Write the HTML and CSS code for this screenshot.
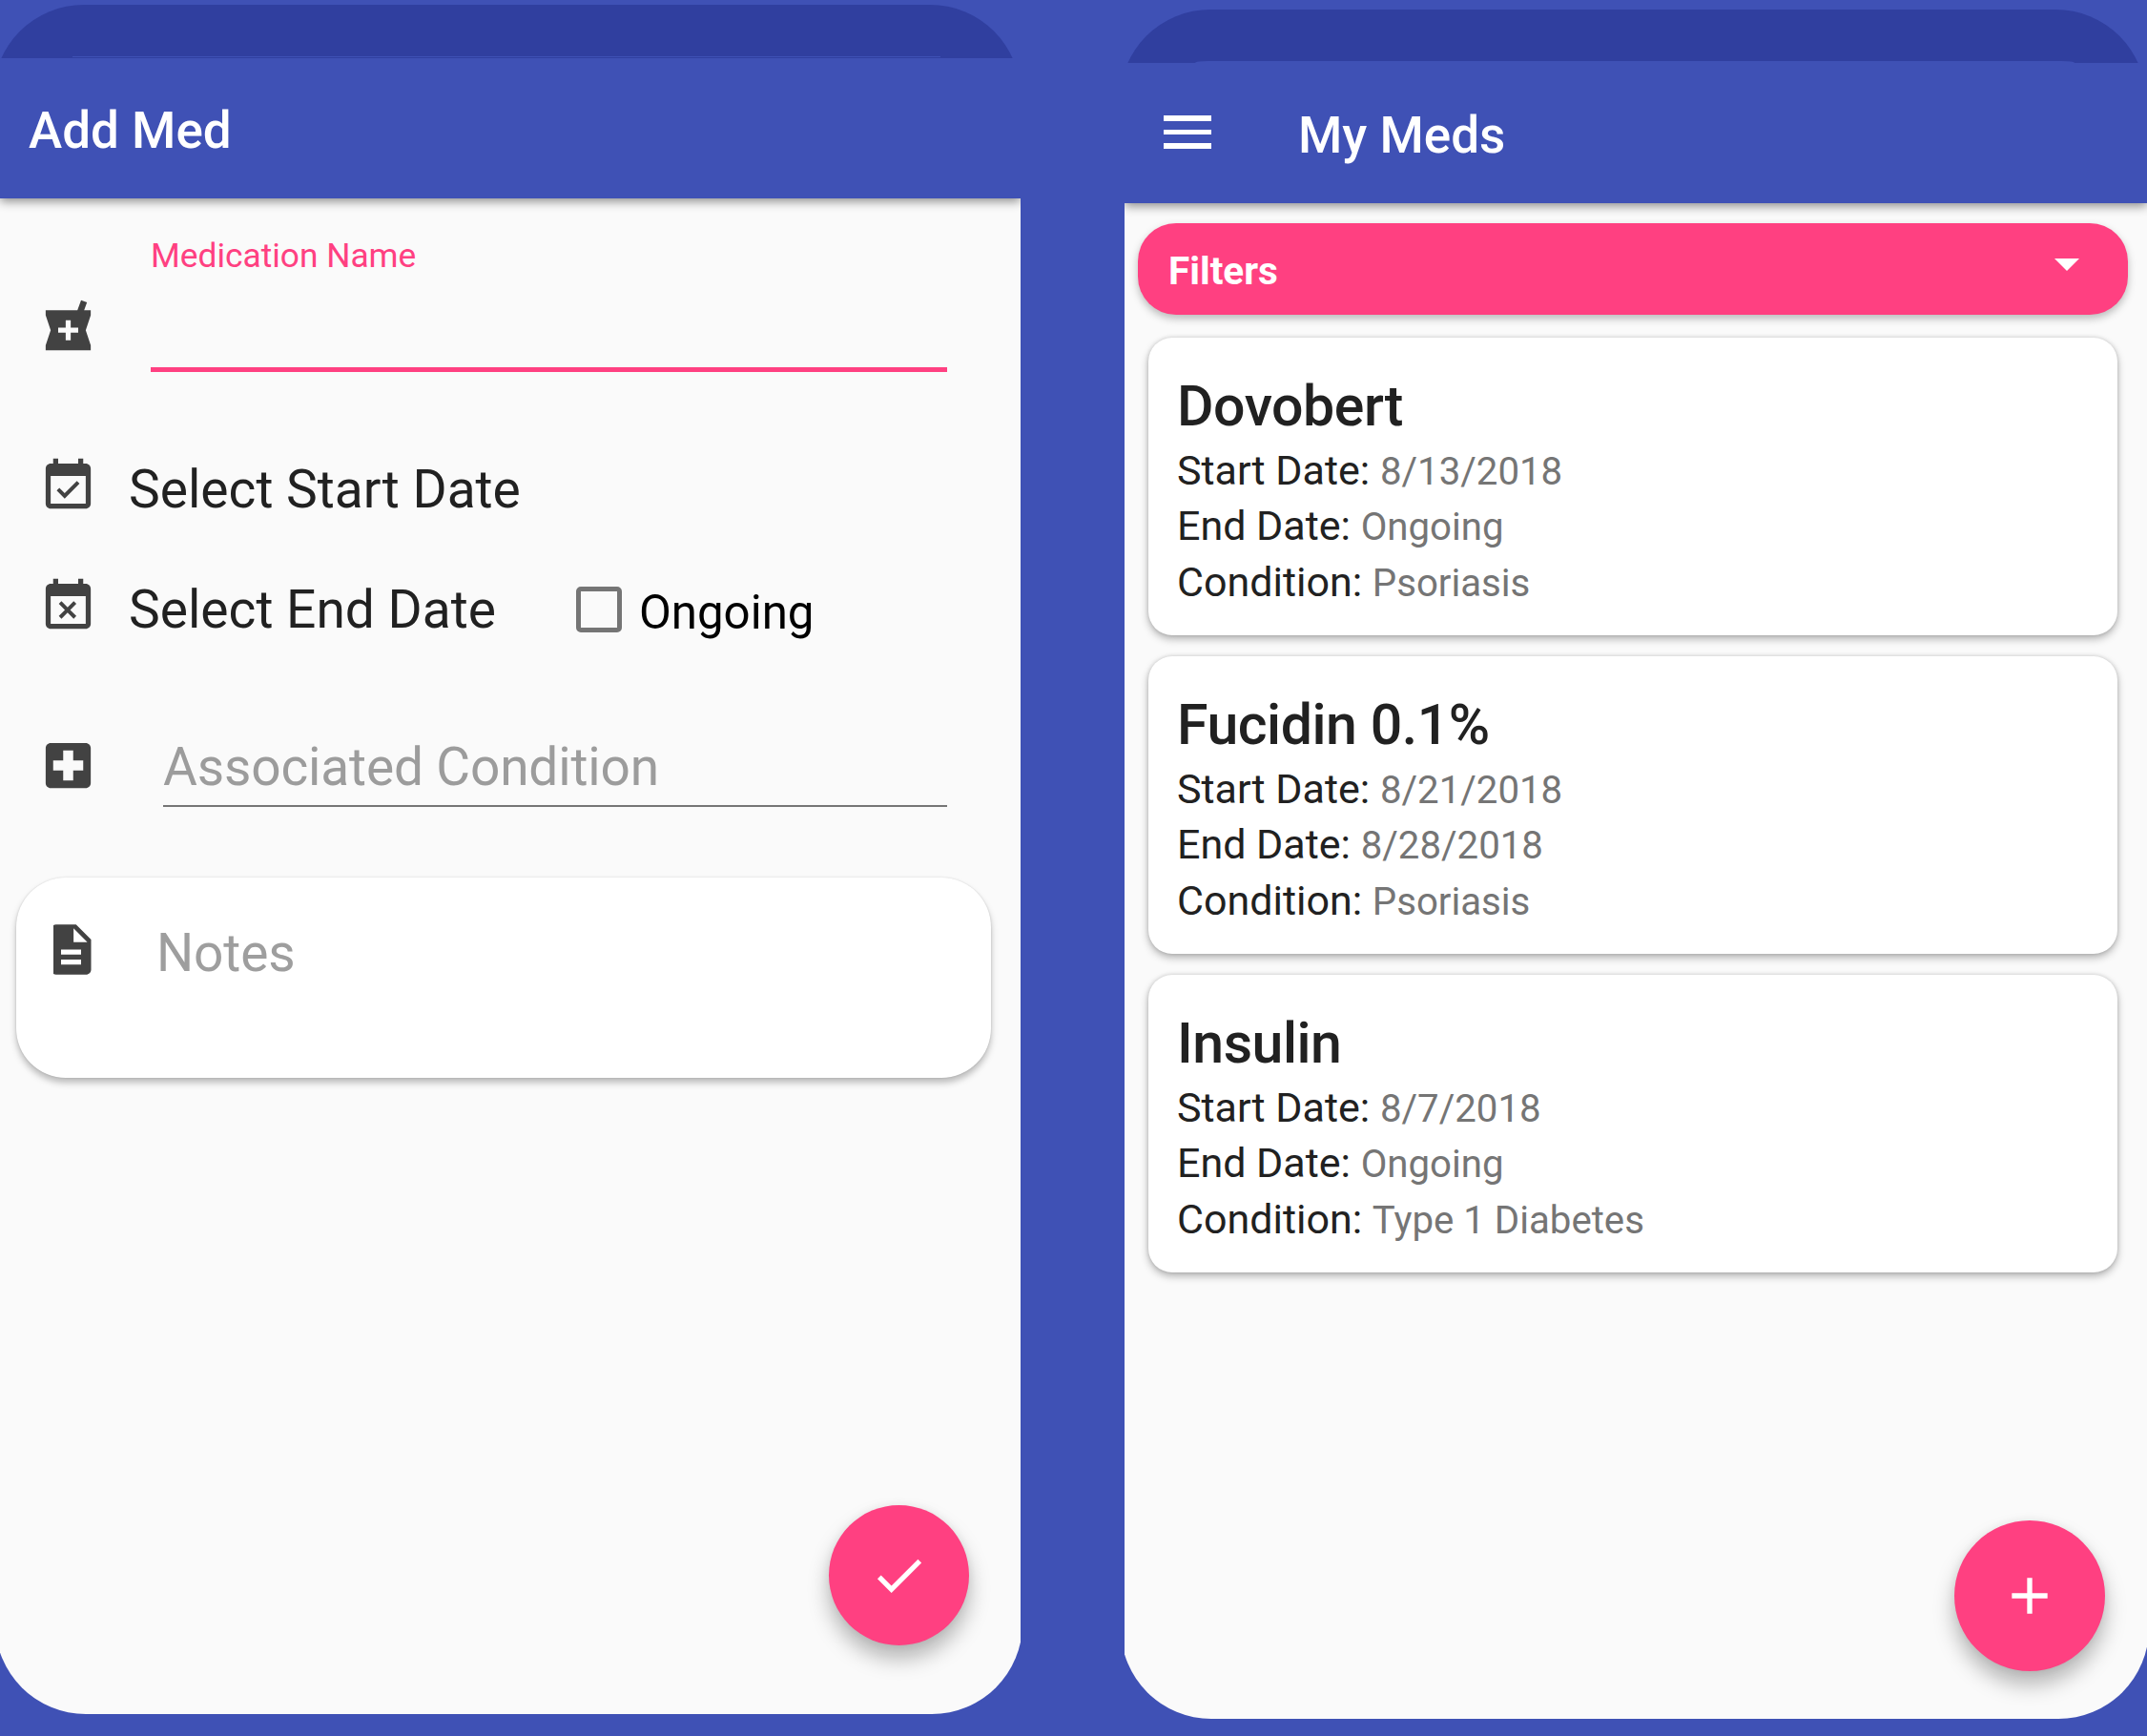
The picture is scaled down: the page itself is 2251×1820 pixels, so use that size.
FILE: index.html
```html
<!DOCTYPE html>
<html lang="en">
<head>
<meta charset="utf-8">
<title>Meds</title>
<link rel="stylesheet" href="styles.css">
</head>
<body>
<main class="stage">
  <section class="phone phone-add">
    <div class="status"><div class="status-fill"></div></div>
    <div class="screen">
      <header class="appbar"><h1 class="title">Add Med</h1></header>
      <form class="form">
        <div class="row row-name">
          <svg class="icon" viewBox="0 0 24 24"><path fill="currentColor" d="M21 5h-2.640l1.140-3.140L17.150 1l-1.460 4H3v2l2 6-2 6v2h18v-2l-2-6 2-6V5zm-5 9h-3v3h-2v-3H8v-2h3V9h2v3h3v2z"/></svg>
          <div class="name-field"><label class="float-label">Medication Name</label></div>
        </div>
        <div class="row row-start">
          <svg class="icon" viewBox="0 0 24 24"><path fill="currentColor" d="M16.530 11.060L15.470 10l-4.880 4.880-2.120-2.120-1.060 1.060L10.590 17l5.940-5.940zM19 3h-1V1h-2v2H8V1H6v2H5c-1.110 0-1.990.9-1.990 2L3 19c0 1.100.890 2 2 2h14c1.100 0 2-.9 2-2V5c0-1.100-.9-2-2-2zm0 16H5V8h14v11z"/></svg>
          <span class="pick">Select Start Date</span>
        </div>
        <div class="row row-end">
          <svg class="icon" viewBox="0 0 24 24"><path fill="currentColor" d="M9.310 17l2.440-2.440L14.190 17l1.060-1.060-2.440-2.440 2.440-2.440L14.190 10l-2.440 2.440L9.310 10l-1.060 1.060 2.440 2.440-2.440 2.440L9.310 17zM19 3h-1V1h-2v2H8V1H6v2H5c-1.110 0-1.990.9-1.990 2L3 19c0 1.100.890 2 2 2h14c1.100 0 2-.9 2-2V5c0-1.100-.9-2-2-2zm0 16H5V8h14v11z"/></svg>
          <span class="pick pick-end">Select End Date</span>
          <span class="checkbox"></span>
          <span class="check-label">Ongoing</span>
        </div>
        <div class="row row-cond">
          <svg class="icon" viewBox="0 0 24 24"><path fill="currentColor" d="M19 3H5c-1.100 0-1.990.9-1.990 2L3 19c0 1.100.9 2 2 2h14c1.100 0 2-.9 2-2V5c0-1.100-.9-2-2-2zm-1 11h-4v4h-4v-4H6v-4h4V6h4v4h4v4z"/></svg>
          <div class="cond-field">Associated Condition</div>
        </div>
        <div class="notes">
          <svg class="icon" viewBox="0 0 24 24"><path fill="currentColor" d="M14 2H6c-1.100 0-1.990.9-1.990 2L4 20c0 1.100.890 2 1.990 2H18c1.100 0 2-.9 2-2V8l-6-6zm2 16H8v-2h8v2zm0-4H8v-2h8v2zm-3-5V3.500L18.500 9H13z"/></svg>
          <span class="notes-text">Notes</span>
        </div>
      </form>
    </div>
    <div class="fab fab-check"><svg viewBox="0 0 24 24"><path fill="currentColor" d="M9 16.170L4.830 12l-1.420 1.410L9 19 21 7l-1.410-1.410z"/></svg></div>
  </section>

  <section class="phone phone-list">
    <div class="status"><div class="status-fill"></div></div>
    <div class="screen">
      <header class="appbar">
        <div class="burger"><i></i><i></i><i></i></div>
        <h1 class="title">My Meds</h1>
      </header>
      <div class="list">
        <div class="filters"><span>Filters</span><i class="caret"></i></div>
        <article class="card">
          <h2>Dovobert</h2>
          <p>Start Date: <span>8/13/2018</span></p>
          <p>End Date: <span>Ongoing</span></p>
          <p>Condition: <span>Psoriasis</span></p>
        </article>
        <article class="card">
          <h2>Fucidin 0.1%</h2>
          <p>Start Date: <span>8/21/2018</span></p>
          <p>End Date: <span>8/28/2018</span></p>
          <p>Condition: <span>Psoriasis</span></p>
        </article>
        <article class="card">
          <h2>Insulin</h2>
          <p>Start Date: <span>8/7/2018</span></p>
          <p>End Date: <span>Ongoing</span></p>
          <p>Condition: <span>Type 1 Diabetes</span></p>
        </article>
      </div>
    </div>
    <div class="fab fab-add"><svg viewBox="0 0 24 24"><path fill="currentColor" d="M19 13h-6v6h-2v-6H5v-2h6V5h2v6h6v2z"/></svg></div>
  </section>
</main>
</body>
</html>
```
FILE: styles.css
```css
* { box-sizing: border-box; }
body {
  margin: 0;
  background: #3f51b5;
  font-family: Roboto, sans-serif;
  color: #212121;
}
.stage {
  display: flex;
  justify-content: space-between;
  width: 2251px;
  height: 1820px;
  overflow: hidden;
}
h1, h2, p { margin: 0; }

.phone {
  position: relative;
  display: flex;
  flex-direction: column;
}
.phone-add { width: 1070px; height: 1797px; padding-top: 5px; }
.phone-list { width: 1072px; height: 1802px; padding-top: 10px; }

.status { position: relative; height: 56px; overflow: hidden; flex: none; }
.status-fill {
  height: 190px;
  border-radius: 95px;
  background: #303f9f;
}
.phone-add .status-fill { margin: 0 0 0 -7px; }
.phone-list .status-fill { margin: 0 1px 0 -5px; }

/* thin lip of the app bar over the status bar */
.status::after {
  content: "";
  position: absolute;
  background: #3f51b5;
}
.phone-add .status::after { left: 76px; right: 84px; bottom: 1px; height: 1px; }
.phone-list .status::after {
  left: 74px;
  right: 76px;
  bottom: 0;
  height: 2px;
  border-radius: 14px 14px 0 0 / 2px 2px 0 0;
}

.screen {
  flex: 1;
  background: #fafafa;
  border-radius: 0 0 95px 95px;
}
.phone-add .screen { margin: 0 -2px 0 -5px; padding: 0 2px 0 5px; clip-path: inset(0 2px 0 5px); }
.phone-list .screen { margin: 0 -2px 0 -4px; padding: 0 2px 0 4px; clip-path: inset(0 2px 0 4px); }

.appbar {
  display: flex;
  align-items: center;
  height: 147px;
  background: #3f51b5;
  box-shadow: 0 3px 10px rgba(0, 0, 0, .45);
}
.title {
  font-size: 53px;
  line-height: 62px;
  font-weight: 500;
  color: #fff;
}
.phone-add .title { padding: 5px 0 0 30px; }
.phone-list .title { padding: 5px 0 0 91px; }
.burger {
  display: flex;
  flex-direction: column;
  gap: 8.5px;
  width: 50px;
  margin: -2px 0 0 41px;
}
.burger i { height: 5.700px; background: #fff; }

.icon { flex: none; width: 63px; height: 63px; color: #424242; }
.row { display: flex; align-items: flex-start; padding-left: 40px; }
.row-name { height: 255px; padding-top: 104px; }
.name-field {
  width: 835px;
  height: 143px;
  margin: -65px 0 0 55px;
  border-bottom: 5px solid #ff4081;
}
.float-label { font-size: 35.300px; line-height: 42px; color: #ff4081; display: block; }
.row-start { height: 126px; padding-top: 15px; }
.row-end { height: 168px; padding-top: 15px; }
.pick { font-size: 55.100px; line-height: 66px; margin: 2px 0 0 32px; }
.pick-end { width: 469px; }
.checkbox {
  width: 48px;
  height: 48px;
  margin-top: 11px;
  border: 5px solid #757575;
  border-radius: 5px;
}
.check-label { font-size: 49.200px; line-height: 58px; margin: 9px 0 0 18px; color: #000; }
.row-cond { height: 163px; padding-top: 14px; }
.cond-field {
  width: 822px;
  height: 79px;
  margin: -4px 0 0 68px;
  font-size: 55px;
  letter-spacing: -.150px;
  line-height: 74px;
  color: #9c9c9c;
  border-bottom: 2px solid #757575;
}
.notes {
  display: flex;
  width: 1022px;
  height: 210px;
  margin-left: 17px;
  padding: 44px 0 0 26px;
  background: #fff;
  border-radius: 52px;
  box-shadow: 0 5px 7px rgba(0, 0, 0, .26), 0 0 2px rgba(0, 0, 0, .15);
}
.notes .icon { clip-path: inset(0 0 0 13px); }
.notes-text { font-size: 55px; letter-spacing: -.150px; line-height: 70px; margin-left: 58px; color: #9e9e9e; }

.fab {
  position: absolute;
  display: flex;
  align-items: center;
  justify-content: center;
  border-radius: 50%;
  background: #ff4081;
  color: #fff;
  box-shadow: 0 14px 22px rgba(0, 0, 0, .28), 0 0 10px rgba(0, 0, 0, .06);
}
.fab-check { width: 147px; height: 147px; left: 869px; top: 1578px; }
.fab-check svg { width: 63px; height: 63px; }
.fab-add { width: 158px; height: 158px; left: 870px; top: 1594px; }
.fab-add svg { width: 64px; height: 64px; }

.list { padding-top: 21px; }
.filters {
  display: flex;
  align-items: flex-start;
  justify-content: space-between;
  width: 1038px;
  height: 96px;
  margin: 0 0 24px 14px;
  padding: 27px 51px 0 32px;
  background: #ff4081;
  border-radius: 40px;
  box-shadow: 0 4px 8px rgba(0, 0, 0, .26);
  font-size: 40.500px;
  line-height: 47px;
  font-weight: 700;
  color: #fff;
}
.caret {
  margin-top: 10px;
  border: solid transparent;
  border-width: 13px 13px 0;
  border-top-color: #fff;
}
.card {
  width: 1016px;
  height: 312px;
  margin: 0 0 22px 25px;
  padding: 37px 30px 0;
  background: #fff;
  border-radius: 25px;
  box-shadow: 0 4px 8px rgba(0, 0, 0, .28), 0 0 4px rgba(0, 0, 0, .15);
}
.card h2 {
  margin-bottom: 3px;
  font-size: 59px;
  letter-spacing: -.450px;
  line-height: 70px;
  font-weight: 500;
}
.card p { font-size: 43px; line-height: 58.300px; white-space: nowrap; }
.card p span { font-size: 40.200px; line-height: 1; color: #757575; }
```
